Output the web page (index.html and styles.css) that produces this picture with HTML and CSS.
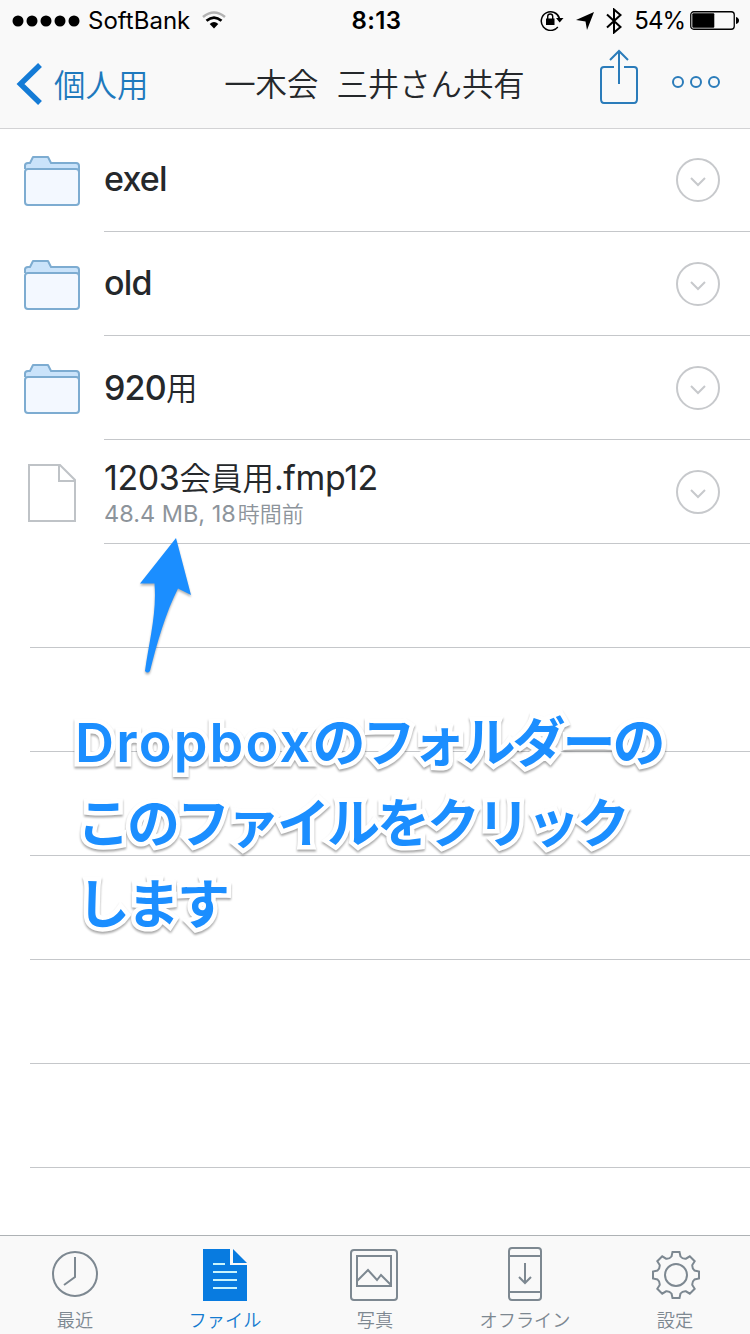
FILE: index.html
```html
<!DOCTYPE html>
<html lang="ja">
<head>
<meta charset="utf-8">
<title>一木会 三井さん共有</title>
<link rel="stylesheet" href="styles.css">
</head>
<body>
<svg class="defs" aria-hidden="true">
  <symbol id="folder" viewBox="0 0 60 54">
    <path d="M3 15V10Q3 6 7 6H8L11.500 1H26L29 6H53Q57 6 57 10V15Z" fill="#cae3fa"/>
    <path d="M3 13H57V46Q57 49 54 49H6Q3 49 3 46Z" fill="#f3f8ff"/>
    <path d="M3 13V9.500Q3 7 6 7H8L11 1H26L29 7H54Q57 7 57 10V46Q57 49 54 49H6Q3 49 3 46V16Q3 13 6 13H54Q57 13 57 16" fill="none" stroke="#7dacd1" stroke-width="2" stroke-linejoin="round"/>
  </symbol>
  <symbol id="more" viewBox="0 0 44 44">
    <circle cx="22" cy="22" r="21" fill="none" stroke="#c7c9cc" stroke-width="2"/>
    <path d="M15 20L22 27L29 20" fill="none" stroke="#c7c9cc" stroke-width="2"/>
  </symbol>
</svg>
<div class="screen">
  <header class="header">
    <div class="status">
      <div class="status-left">
        <svg class="signal" viewBox="0 0 68 12"><circle cx="6" cy="6" r="5.500"/><circle cx="20" cy="6" r="5.500"/><circle cx="34" cy="6" r="5.500"/><circle cx="48" cy="6" r="5.500"/><circle cx="62" cy="6" r="5.500"/></svg>
        <span class="carrier">SoftBank</span>
        <svg class="wifi" viewBox="0 0 24 18">
          <path d="M1 6Q12 -3 23 6" fill="none" stroke="#b3b3b3" stroke-width="2.600"/>
          <path d="M4.500 9.800Q12 3.500 19.500 9.800" fill="none" stroke="#000" stroke-width="2.800"/>
          <path d="M7.700 13Q12 9 16.300 13L12 17.500Z"/>
        </svg>
      </div>
      <span class="clock">8:13</span>
      <div class="status-right">
        <svg class="lock" viewBox="0 0 24 22">
          <path d="M17.800 18A9.300 9.300 0 1 1 19.500 9.500" fill="none" stroke="#000" stroke-width="1.500"/>
          <path d="M16 9H23.500L19.700 13.500Z"/>
          <rect x="6" y="9.500" width="8.500" height="6.500"/>
          <path d="M7.700 10V7.500a2.500 2.500 0 0 1 5 0V10" fill="none" stroke="#000" stroke-width="1.400"/>
        </svg>
        <svg class="locate" viewBox="0 0 18 18"><path d="M18 0L11 18L9.500 9.500L0 8Z"/></svg>
        <svg class="bluetooth" viewBox="0 0 16 26"><path d="M1 6.500L14.500 19L8 24.500V1.500L14.500 7L1 19.500" fill="none" stroke="#000" stroke-width="2"/></svg>
        <span class="percent">54%</span>
        <svg class="battery" viewBox="0 0 49 20">
          <rect x=".75" y=".75" width="43.500" height="17.500" rx="3" fill="none" stroke="#000" stroke-width="1.300"/>
          <rect x="2.300" y="2.300" width="22" height="14.500" rx="1"/>
          <path d="M46 6Q49 7 49 9.500T46 13Z"/>
        </svg>
      </div>
    </div>
    <nav class="nav">
      <a class="back">
        <svg class="chevron" viewBox="0 0 26 42"><path d="M24 2L4.500 21L24 40" fill="none" stroke="#147bd6" stroke-width="5.500"/></svg>
        <span>個人用</span>
      </a>
      <h1 class="title"><span>一木会</span><span>三井さん共有</span></h1>
      <div class="actions">
        <svg class="share" viewBox="0 0 40 56" fill="none" stroke="#2b7cba" stroke-width="2"><path d="M15 18H5Q2 18 2 21V50Q2 54 5 54H35Q38 54 38 50V21Q38 18 35 18H25M20 35V2M11 11L20 2L29 11"/></svg>
        <svg class="dots" viewBox="0 0 50 14" fill="none" stroke="#2b7cba" stroke-width="2"><circle cx="7" cy="7" r="5"/><circle cx="25" cy="7" r="5"/><circle cx="43" cy="7" r="5"/></svg>
      </div>
    </nav>
  </header>
  <main class="list">
    <div class="row"><svg class="folder"><use href="#folder"/></svg><div class="cell"><span class="name medium">exel</span><svg class="more"><use href="#more"/></svg></div></div>
    <div class="row"><svg class="folder"><use href="#folder"/></svg><div class="cell"><span class="name medium">old</span><svg class="more"><use href="#more"/></svg></div></div>
    <div class="row"><svg class="folder"><use href="#folder"/></svg><div class="cell"><span class="name medium">920<span class="thin">用</span></span><svg class="more"><use href="#more"/></svg></div></div>
    <div class="row">
      <svg class="file" viewBox="0 0 48 58" fill="none" stroke="#bfc3c7" stroke-width="2"><path d="M1 1H32L47 16V57H1ZM31 1V17H47"/></svg>
      <div class="cell"><div class="texts"><span class="name">1203<span class="thin">会員用</span>.fmp12</span><span class="meta">48.4 MB, 18<span class="meta-cjk">時間前</span></span></div><svg class="more"><use href="#more"/></svg></div>
    </div>
    <div class="blank"></div><div class="blank"></div><div class="blank"></div><div class="blank"></div><div class="blank"></div><div class="blank"></div>
    <svg class="arrow" viewBox="0 0 60 145"><path d="M41 2L56 59L43 52.500C31 76 22 107 15 135Q12.500 138 10 135C14 106 22 77 19.500 47.500L5 47.500Z" fill="#1b8eff"/></svg>
    <p class="note"><span class="note-line"><span class="latin">Dropbox</span>のフォルダーの</span><span class="note-line">このファイルをクリック</span><span class="note-line">します</span></p>
  </main>
  <footer class="tabs">
    <a class="tab"><svg viewBox="0 0 56 56" fill="none" stroke="#7d8891" stroke-width="2"><circle cx="28" cy="28" r="22"/><path d="M28 11V31L17 39"/></svg><span>最近</span></a>
    <a class="tab active"><svg viewBox="0 0 56 56"><path d="M6 3H33V19H50V55H6Z" fill="#087be0"/><path d="M36 3L50 17H36Z" fill="#087be0"/><path d="M16 18H28M16 26H40M16 34H40M16 42H40" stroke="#c9f4fc" stroke-width="2"/></svg><span>ファイル</span></a>
    <a class="tab"><svg viewBox="0 0 56 56" fill="none" stroke="#7d8891" stroke-width="2"><rect x="4" y="4" width="46" height="50" rx="3"/><rect x="10" y="10" width="34" height="30"/><path d="M10 35L21 24L30 34L34 29L44 39"/></svg><span>写真</span></a>
    <a class="tab"><svg viewBox="0 0 56 56" fill="none" stroke="#7d8891" stroke-width="2"><rect x="12" y="2" width="32" height="52" rx="3"/><path d="M12 10H44M12 46H44M28 17V37M22 31L28 37L34 31"/></svg><span>オフライン</span></a>
    <a class="tab"><svg viewBox="0 0 56 56" fill="none" stroke="#7d8891" stroke-width="2"><g transform="translate(29 29)"><circle r="11"/><path d="M-3.500 -23H3.500L4.500 -18.500Q6.500 -16 9.900 -16.300L13.800 -18.700L18.700 -13.800L16.300 -9.900Q16 -6.500 18.500 -4.500L23 -3.500V3.500L18.500 4.500Q16 6.500 16.300 9.900L18.700 13.800L13.800 18.700L9.900 16.300Q6.500 16 4.500 18.500L3.500 23H-3.500L-4.500 18.500Q-6.500 16 -9.900 16.300L-13.800 18.700L-18.700 13.800L-16.300 9.900Q-16 6.500 -18.500 4.500L-23 3.500V-3.500L-18.500 -4.500Q-16 -6.500 -16.300 -9.900L-18.700 -13.800L-13.800 -18.700L-9.900 -16.300Q-6.500 -16 -4.500 -18.500Z"/></g></svg><span>設定</span></a>
  </footer>
</div>
</body>
</html>
```
FILE: styles.css
```css
* { box-sizing: border-box; }
body { margin: 0; background: #fff; font-family: Inter, "Noto Sans CJK JP", sans-serif; color: #25282b; }
svg { display: block; flex: none; }
.defs { position: absolute; width: 0; height: 0; }
.screen { width: 750px; height: 1334px; display: flex; flex-direction: column; overflow: hidden; }

.header { position: relative; z-index: 1; height: 128px; flex: none; background: #f9f9f9; box-shadow: 0 1px #d3d3d5; }
.status { height: 40px; display: grid; grid-template-columns: 1fr auto 1fr; align-items: center; padding: 1px 11px 0 12px; color: #000; font-size: 24px; line-height: 39px; }
.status-left { display: flex; align-items: center; }
.signal { width: 68px; height: 12px; }
.carrier { margin-left: 8px; }
.wifi { width: 24px; height: 18px; margin: -1px 0 0 12px; }
.clock { font-weight: 600; letter-spacing: .4px; padding-left: 2px; }
.status-right { display: flex; align-items: center; justify-content: flex-end; }
.lock { width: 24px; height: 22px; margin-top: -1px; }
.locate { width: 18px; height: 18px; margin-left: 12px; }
.bluetooth { width: 16px; height: 26px; margin-left: 12px; }
.percent { margin-left: 12px; letter-spacing: -1px; }
.battery { width: 49px; height: 20px; margin-left: 5px; }

.nav { height: 88px; display: grid; grid-template-columns: 1fr auto 1fr; align-items: center; padding: 0 29px 0 16px; }
.back { display: flex; align-items: center; gap: 12px; font: 350 31.500px/44px "Noto Sans CJK JP", sans-serif; color: #1e79bd; }
.back span, .title { margin-top: -2px; }
.chevron { width: 26px; height: 42px; }
.title { margin-bottom: 0; padding-left: 12px; display: flex; gap: 18px; font: 350 31.400px/44px "Noto Sans CJK JP", sans-serif; }
.actions { display: flex; justify-content: flex-end; align-items: center; gap: 32px; }
.share { width: 40px; height: 56px; margin-top: -14px; }
.dots { width: 50px; height: 14px; margin-top: -4px; }

.list { position: relative; flex: 1; min-height: 0; overflow: hidden; }
.row { height: 104px; display: flex; padding-left: 22px; }
.folder { width: 60px; height: 54px; margin: 28px 22px 0 0; }
.file { width: 48px; height: 58px; margin: 24px 28px 0 6px; }
.cell { flex: 1; display: flex; align-items: center; justify-content: space-between; padding-right: 30px; border-bottom: 1px solid #c5c7ca; }
.name { font-size: 34px; line-height: 44px; letter-spacing: -.4px; }
.medium { font-weight: 500; letter-spacing: -.8px; margin-top: -1px; }
.thin { font-family: "Noto Sans CJK JP", sans-serif; font-weight: 350; font-size: 31.500px; letter-spacing: 0; }
.more { width: 44px; height: 44px; }
.texts { display: flex; flex-direction: column; margin-top: -1px; }
.meta { font-size: 23.500px; line-height: 28px; margin-top: -2px; color: #8d949b; }
.meta-cjk { font-family: "Noto Sans CJK JP", sans-serif; font-weight: 350; font-size: 22px; margin-left: 2px; }
.blank { height: 104px; margin-left: 30px; border-bottom: 1px solid #c5c7ca; }

.arrow { position: absolute; left: 135px; top: 408px; width: 60px; height: 145px; filter: drop-shadow(0 2px 1px rgba(0,0,0,.3)); }
.note { position: absolute; left: 77px; top: 571px; margin: 0; font: 700 53px/81px "Noto Sans CJK JP", sans-serif; letter-spacing: -3px; color: #1b8eff; white-space: nowrap; -webkit-text-stroke: 9px #fff; paint-order: stroke fill; stroke-linejoin: round; filter: drop-shadow(0 2px 1px rgba(0,0,0,.35)); }
.note-line { display: block; height: 81px; }
.latin { font-family: Inter, sans-serif; font-size: 54px; font-weight: 600; letter-spacing: 2.200px; margin-left: -2px; }

.tabs { height: 99px; flex: none; display: grid; grid-template-columns: repeat(5, 1fr); background: #f9f9f9; border-top: 1px solid #aeb2b5; }
.tab { display: flex; flex-direction: column; align-items: center; padding-top: 10px; font: 350 18.200px/26px "Noto Sans CJK JP", sans-serif; color: #7d8891; }
.tab svg { width: 56px; height: 56px; margin-bottom: 4px; }
.active { color: #147bd0; }
```
